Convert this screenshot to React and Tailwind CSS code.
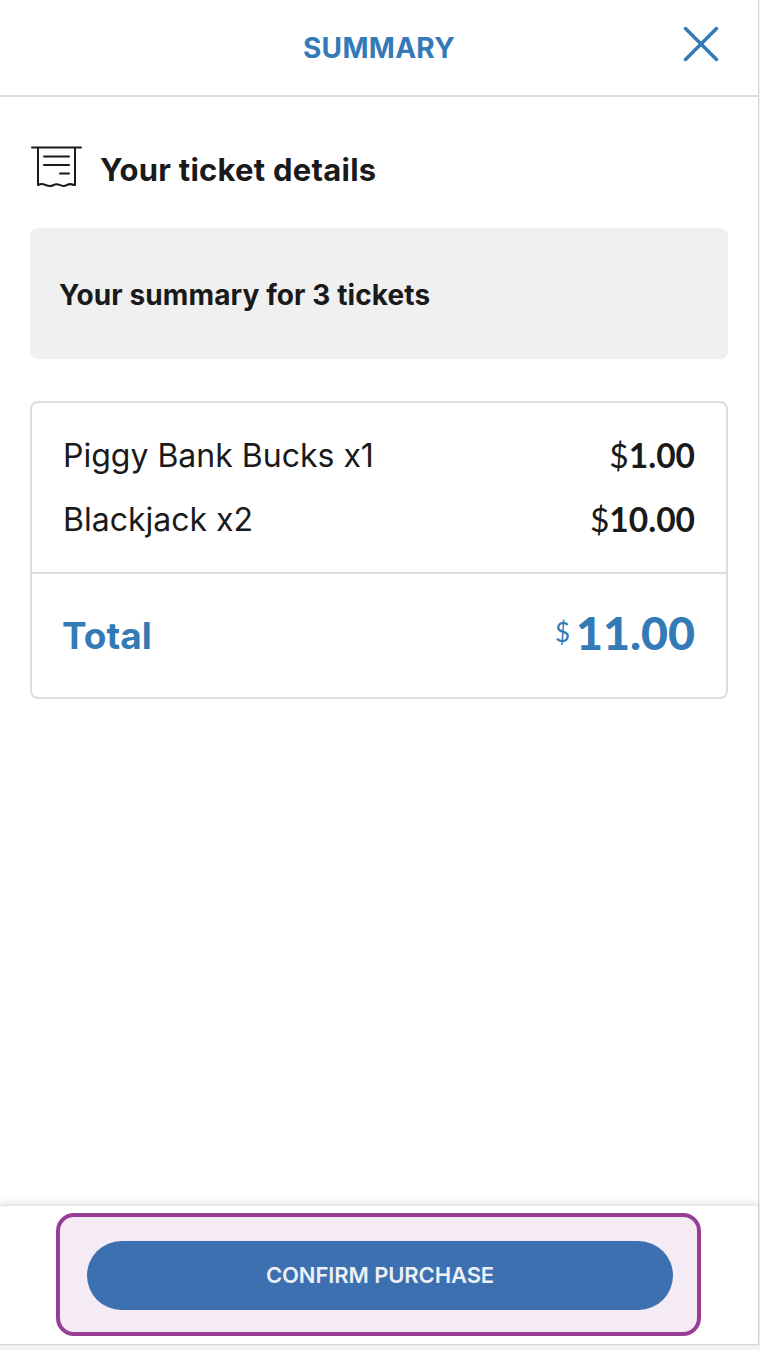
import React from 'react'

const ReceiptIcon = () => (
  <svg width="52" height="44" viewBox="0 0 52 44" fill="none" stroke="#1a1a1a" strokeWidth="2" strokeLinecap="round" strokeLinejoin="round">
    <path d="M2 1.500h49" />
    <path d="M8 2v37c2.500-1.300 4.500-1.300 7-.3s5 2 7.500.8 4.500-1.800 7-.6 4.800 1.600 7.200.2 4.300-1.400 7-.1h1.300V2" />
    <path d="M14 10.500h25" />
    <path d="M14 19h25" />
    <path d="M30 27.500h9" />
  </svg>
)

const CloseIcon = () => (
  <svg width="36" height="36" viewBox="0 0 36 36" fill="none" stroke="#337ab7" strokeWidth="3.500" strokeLinecap="round">
    <path d="M2.500 2.500l31 31" />
    <path d="M33.500 2.500l-31 31" />
  </svg>
)

const LINES = [
  { name: 'Piggy Bank Bucks x1', dollars: '1.00' },
  { name: 'Blackjack x2', dollars: '10.00' },
]

const App = () => {
  return (
    <div className="h-[1350px] bg-[#f1f3f3] font-['Inter',sans-serif] text-[#1a1a1a]">
      <div className="h-[1345px] w-[759px] bg-white border-r border-b border-[#d5d8d8] flex flex-col">
        {/* Header */}
        <header className="h-[97px] shrink-0 border-b-2 border-[#dddddd] flex items-center justify-center relative">
          <h1 className="text-[28px] font-bold text-[#337ab7] tracking-[0.3px]">SUMMARY</h1>
          <button className="absolute right-[39px] top-[26px]"><CloseIcon /></button>
        </header>

        <main className="flex-1 px-[30px]">
          <div className="flex items-center mt-[47px] h-[48px]">
            <ReceiptIcon />
            <h2 className="ml-[18px] mt-[3px] text-[31px] font-bold leading-none tracking-[0.25px]">Your ticket details</h2>
          </div>

          <div className="mt-[36px] h-[131px] w-[698px] rounded-[8px] bg-[#f0f0f0] flex items-center pl-[29px]">
            <p className="text-[28px] font-bold tracking-[0.1px] mt-[3px]">Your summary for 3 tickets</p>
          </div>

          <div className="mt-[42px] w-[698px] h-[298px] border-2 border-[#dddddd] rounded-[8px] flex flex-col">
            <div className="h-[171px] px-[31px] pt-[31px] border-b-2 border-[#dddddd] flex flex-col gap-[20px]">
              {LINES.map((line) => (
                <div key={line.name} className="flex items-center justify-between h-[44px] text-[32px]">
                  <span>{line.name}</span>
                  <span className="font-['Lato',sans-serif] text-[33.5px] -mt-[2px]">$<span className="font-bold">{line.dollars}</span></span>
                </div>
              ))}
            </div>
            <div className="flex-1 px-[31px] flex items-center justify-between text-[#337ab7]">
              <span className="text-[37px] font-bold mt-[1px] -ml-[1px]">Total</span>
              <span className="flex items-start font-['Lato',sans-serif] -mt-[8px]">
                <span className="text-[26px] mr-[6px] mt-[9px]">$</span>
                <span className="text-[46.5px] font-black leading-[56px]">11.00</span>
              </span>
            </div>
          </div>
        </main>

        {/* Footer */}
        <footer className="h-[139px] shrink-0 border-t border-[#e4e4e4] shadow-[0_-3px_6px_rgba(0,0,0,0.09)] pt-[7px] flex justify-center">
          <div className="ml-[-1px] w-[645px] h-[123px] rounded-[18px] border-[4px] border-[#993e97] bg-[#f5ebf4] flex items-center justify-center">
            <button className="ml-[3px] mt-[2px] w-[586px] h-[69px] rounded-full bg-[#3c70b0] text-[#eceff6] text-[22px] font-semibold tracking-[-0.1px]">CONFIRM PURCHASE</button>
          </div>
        </footer>
      </div>
    </div>
  )
}

export default App
